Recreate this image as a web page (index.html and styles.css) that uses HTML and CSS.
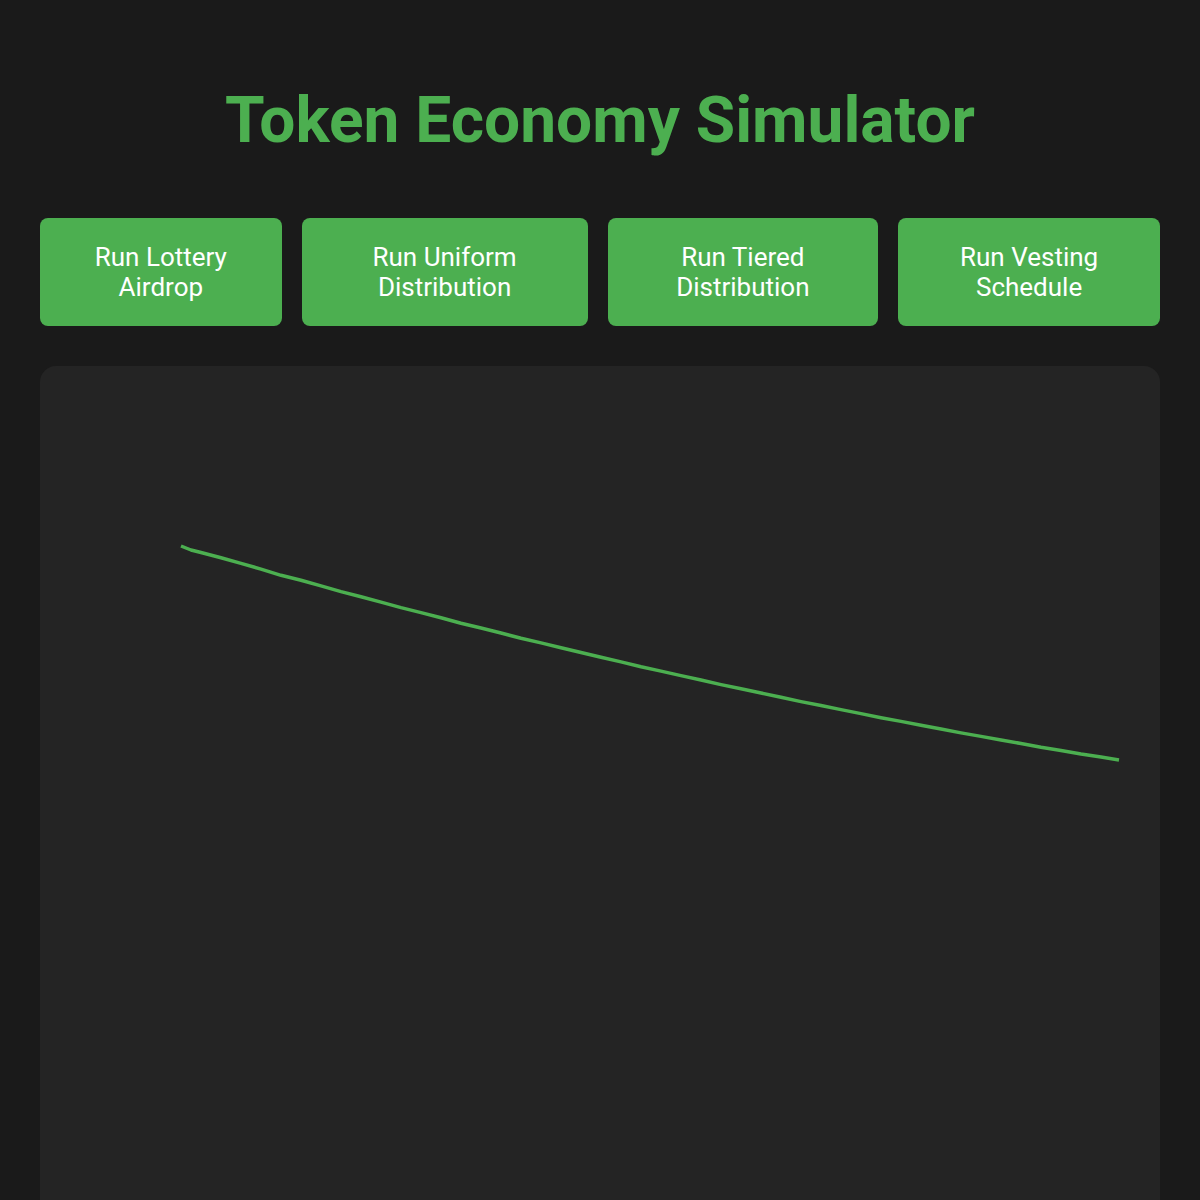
FILE: index.html
```html
<!DOCTYPE html>
<html lang="en">
<head>
<meta charset="utf-8">
<title>Token Economy Simulator</title>
<link rel="stylesheet" href="styles.css">
</head>
<body>
<div class="page">
  <h1 class="title">Token Economy Simulator</h1>
  <div class="controls">
    <button class="btn">Run Lottery Airdrop</button>
    <button class="btn">Run Uniform Distribution</button>
    <button class="btn">Run Tiered Distribution</button>
    <button class="btn">Run Vesting Schedule</button>
  </div>
  <div class="chart-panel">
    <svg class="chart" width="1120" height="900" viewBox="0 0 1120 900">
      <polyline fill="none" stroke="#4caf50" stroke-width="3.5" stroke-linejoin="round" stroke-linecap="butt"
        points="141,180 151,184 161,186.5 181,191.7 201,197.4 221,203.1 241,209.3 261,214.3 281,219.9 301,225.6 321,230.7 341,236.1 361,241.6 381,246.6 401,251.8 421,257.3 441,262 461,267 481,272.2 501,276.9 521,281.7 541,286.5 561,291.2 581,295.9 601,300.8 621,305.1 641,309.6 661,314 681,318.6 701,322.8 721,327 741,331.3 761,335.6 781,339.5 801,343.6 821,347.6 841,351.7 861,355.4 881,359.2 901,363 921,366.9 941,370.4 961,374 981,377.5 1001,381.2 1021,384.4 1041,388 1061,391.1 1079,394"/>
    </svg>
  </div>
</div>
</body>
</html>
```
FILE: styles.css
```css
html, body {
  margin: 0;
  padding: 0;
  background: #1a1a1a;
}
body {
  font-family: Roboto, "Noto Sans", sans-serif;
  color: #ffffff;
}
.page {
  padding: 40px;
}
.title {
  margin: 43px 0 60px;
  font-size: 64px;
  line-height: 75px;
  font-weight: 700;
  color: #4caf50;
  text-align: center;
}
.controls {
  display: flex;
  gap: 20px;
  margin-bottom: 40px;
}
.btn {
  flex: 1 1 auto;
  background: #4caf50;
  color: #ffffff;
  border: none;
  border-radius: 8px;
  padding: 24px 40px;
  font-family: Roboto, sans-serif;
  font-size: 26px;
  font-weight: 400;
  line-height: 30px;
  text-align: center;
}
.chart-panel {
  background: #242424;
  border-radius: 16px;
  height: 900px;
  overflow: hidden;
}
.chart {
  display: block;
}
```
